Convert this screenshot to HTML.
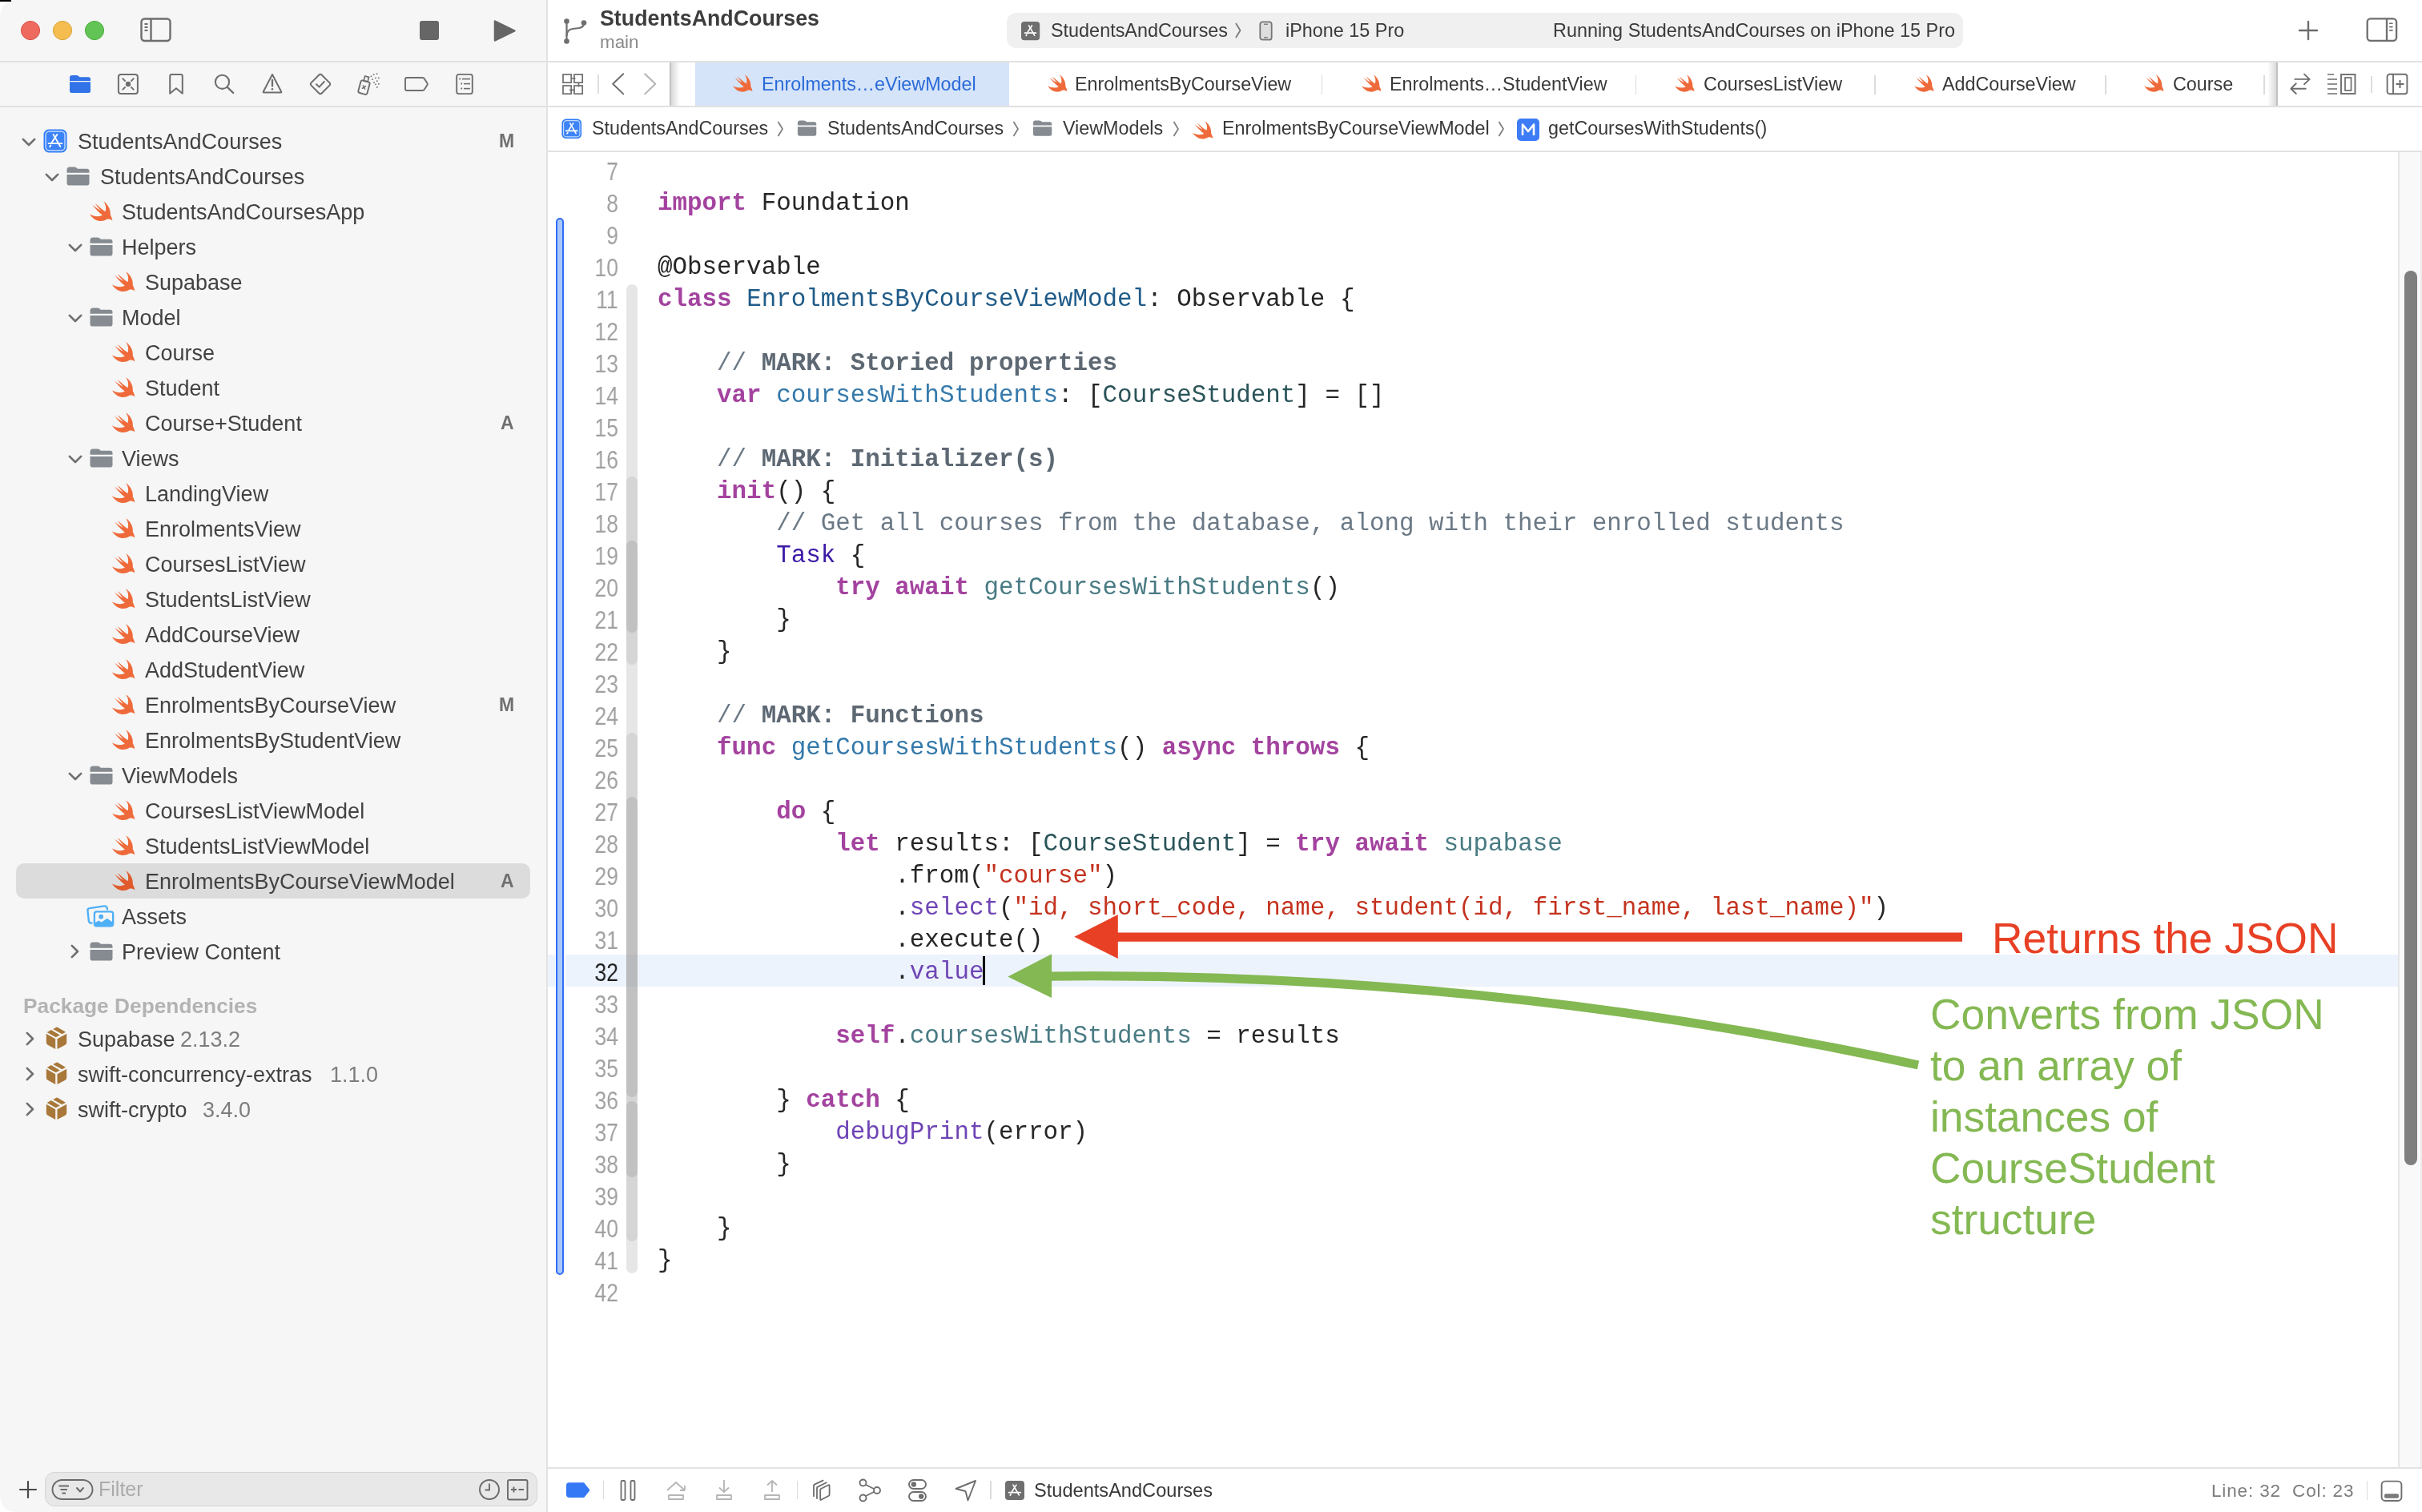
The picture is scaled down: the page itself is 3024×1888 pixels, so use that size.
<!DOCTYPE html><html><head><meta charset="utf-8"><style>
html,body{margin:0;padding:0;width:3024px;height:1888px;overflow:hidden;background:#ffffff;}
.t{position:absolute;white-space:pre;will-change:transform;}
.r{position:absolute;}
.s{position:absolute;overflow:visible;}
</style></head><body>
<div class="r" style="left:0px;top:0px;width:683px;height:1888px;background:#f6f6f6;"></div>
<div class="r" style="left:682px;top:0px;width:2px;height:1888px;background:#e3e3e3;"></div>
<svg class="s" style="left:25px;top:25px;" width="26" height="26" viewBox="0 0 26 26"><circle cx="13" cy="13" r="11.6" fill="#ee6a5e" stroke="#d9534a" stroke-width="1"/></svg>
<svg class="s" style="left:65px;top:25px;" width="26" height="26" viewBox="0 0 26 26"><circle cx="13" cy="13" r="11.6" fill="#f5bd4f" stroke="#dba23a" stroke-width="1"/></svg>
<svg class="s" style="left:105px;top:25px;" width="26" height="26" viewBox="0 0 26 26"><circle cx="13" cy="13" r="11.6" fill="#61c454" stroke="#4fae42" stroke-width="1"/></svg>
<svg class="s" style="left:175px;top:22px;" width="40" height="31" viewBox="0 0 40 31"><rect x="1.5" y="1.5" width="36" height="27.5" rx="4" fill="none" stroke="#6e6e6e" stroke-width="2.4"/><line x1="13.5" y1="1.5" x2="13.5" y2="29" stroke="#6e6e6e" stroke-width="2.4"/><line x1="5.5" y1="8" x2="9.5" y2="8" stroke="#6e6e6e" stroke-width="2"/><line x1="5.5" y1="12" x2="9.5" y2="12" stroke="#6e6e6e" stroke-width="2"/><line x1="5.5" y1="16" x2="9.5" y2="16" stroke="#6e6e6e" stroke-width="2"/></svg>
<div class="r" style="left:524px;top:26px;width:24px;height:24px;background:#666666;border-radius:3px;"></div>
<svg class="s" style="left:615px;top:23px;" width="32" height="31" viewBox="0 0 32 31"><path d="M3 3.5 L27.5 15.5 L3 27.5 Z" fill="#666666" stroke="#666666" stroke-width="2.5" stroke-linejoin="round"/></svg>
<div class="r" style="left:0px;top:76px;width:682px;height:2px;background:#e1e1e1;"></div>
<div class="r" style="left:0px;top:132px;width:682px;height:2px;background:#e1e1e1;"></div>
<svg class="s" style="left:86px;top:93px;" width="28" height="24" viewBox="0 0 28 24"><path d="M1 4 Q1 1 4 1 L9.5 1 Q11 1 12 2 L13.5 3.2 L24.5 3.2 Q27 3.2 27 6 L27 8 L1 8 Z" fill="#3273e8"/><path d="M1 9.3 L27 9.3 L27 20.5 Q27 23 24.5 23 L3.5 23 Q1 23 1 20.5 Z" fill="#3273e8"/></svg>
<svg class="s" style="left:146px;top:91px;" width="28" height="28" viewBox="0 0 28 28"><rect x="1.9" y="2.1" width="24" height="24" rx="3" fill="none" stroke="#6e6e6e" stroke-width="2"/><circle cx="14" cy="14" r="3.2" fill="#6e6e6e"/><path d="M7.2 7.2 L10 10 M20.8 7.2 L18 10 M7.2 20.8 L10 18 M20.8 20.8 L18 18" stroke="#6e6e6e" stroke-width="1.9" stroke-linecap="round"/></svg>
<svg class="s" style="left:210px;top:91px;" width="20" height="28" viewBox="0 0 20 28"><path d="M2.2 25.8 L2.2 4 Q2.2 2 4.2 2 L15.8 2 Q17.8 2 17.8 4 L17.8 25.8 L10 19.3 Z" fill="none" stroke="#6e6e6e" stroke-width="2" stroke-linejoin="round"/></svg>
<svg class="s" style="left:265px;top:90px;" width="30" height="30" viewBox="0 0 30 30"><circle cx="12.5" cy="12.3" r="8.6" fill="none" stroke="#6e6e6e" stroke-width="2.1"/><line x1="18.8" y1="18.8" x2="26.2" y2="26" stroke="#6e6e6e" stroke-width="2.4" stroke-linecap="round"/></svg>
<svg class="s" style="left:326px;top:90px;" width="28" height="28" viewBox="0 0 28 28"><path d="M14 3 L25.2 24.5 Q25.6 25.5 24.5 25.5 L3.5 25.5 Q2.4 25.5 2.8 24.5 Z" fill="none" stroke="#6e6e6e" stroke-width="2" stroke-linejoin="round"/><path d="M14 10 L14 17.5" stroke="#6e6e6e" stroke-width="2.3" stroke-linecap="round"/><circle cx="14" cy="21.2" r="1.3" fill="#6e6e6e"/></svg>
<svg class="s" style="left:386px;top:91px;" width="28" height="28" viewBox="0 0 28 28"><path d="M14 1.8 Q14.9 1.8 15.6 2.5 L25.5 12.4 Q26.2 13.1 26.2 14 Q26.2 14.9 25.5 15.6 L15.6 25.5 Q14.9 26.2 14 26.2 Q13.1 26.2 12.4 25.5 L2.5 15.6 Q1.8 14.9 1.8 14 Q1.8 13.1 2.5 12.4 L12.4 2.5 Q13.1 1.8 14 1.8 Z" fill="none" stroke="#6e6e6e" stroke-width="2"/><path d="M9 14.2 L12.5 17.6 L18.8 11" fill="none" stroke="#6e6e6e" stroke-width="2" stroke-linecap="round" stroke-linejoin="round"/></svg>
<svg class="s" style="left:445px;top:91px;" width="32" height="29" viewBox="0 0 32 29"><g transform="rotate(15 9 17)"><rect x="4" y="10" width="11.5" height="16" rx="2.2" fill="none" stroke="#6e6e6e" stroke-width="1.9"/><rect x="7.3" y="4" width="5" height="6" fill="none" stroke="#6e6e6e" stroke-width="1.7"/><path d="M7.6 15.6 L11.8 20 M11.8 15.6 L7.6 20" stroke="#6e6e6e" stroke-width="1.5"/></g><g fill="#6e6e6e"><rect x="17.6" y="3.5" width="1.6" height="1.6"/><rect x="20.8" y="1.4" width="1.6" height="1.6"/><rect x="24.8" y="0.4" width="1.6" height="1.6"/><rect x="19.2" y="7.4" width="1.6" height="1.6"/><rect x="23.2" y="5.6" width="1.6" height="1.6"/><rect x="27" y="5.6" width="1.6" height="1.6"/><rect x="21.2" y="11.3" width="1.6" height="1.6"/><rect x="25" y="9.4" width="1.6" height="1.6"/><rect x="23.2" y="13.5" width="1.6" height="1.6"/><rect x="27" y="13" width="1.6" height="1.6"/><rect x="25" y="17.2" width="1.6" height="1.6"/></g></svg>
<svg class="s" style="left:504px;top:94px;" width="32" height="22" viewBox="0 0 32 22"><path d="M4 3 L23.5 3 Q25 3 26 4.4 L29.5 10 Q30 11 29.5 12 L26 17.6 Q25 19 23.5 19 L4 19 Q2 19 2 17 L2 5 Q2 3 4 3 Z" fill="none" stroke="#6e6e6e" stroke-width="1.9" stroke-linejoin="round"/></svg>
<svg class="s" style="left:568px;top:91px;" width="24" height="28" viewBox="0 0 24 28"><rect x="2.2" y="1.9" width="19.6" height="24.2" rx="2.6" fill="none" stroke="#6e6e6e" stroke-width="1.9"/><g fill="#6e6e6e"><rect x="5.3" y="6.6" width="1.8" height="1.8"/><rect x="9.0" y="6.8" width="10" height="1.6"/><rect x="7.3" y="12.6" width="1.8" height="1.8"/><rect x="11.0" y="12.8" width="8" height="1.6"/><rect x="7.3" y="18.6" width="1.8" height="1.8"/><rect x="11.0" y="18.8" width="8" height="1.6"/></g></svg>
<svg class="s" style="left:27.4px;top:171.7px;" width="18" height="11" viewBox="0 0 18 11"><path d="M1.8 1.8 L9 9 L16.2 1.8" fill="none" stroke="#6f6f6f" stroke-width="2.6" stroke-linecap="round" stroke-linejoin="round"/></svg>
<svg class="s" style="left:54.4px;top:160.89999999999998px;" width="30" height="30" viewBox="0 0 30 30"><rect x="0.5" y="0.5" width="29" height="29" rx="6.5" fill="#2d7bf7"/><rect x="3" y="3" width="24" height="24" rx="4.5" fill="#3d83f7" stroke="#c5dbfd" stroke-width="1.4"/><g stroke="#ffffff" stroke-width="1.9" stroke-linecap="round" fill="none"><path d="M12.6 6.9 L21.3 22"/><path d="M17.3 6.9 L10.9 16.6"/><path d="M6.6 18.1 L23.5 18.1"/><path d="M9.3 20.6 L8.2 22.2"/></g></svg>
<div class="t" style="left:96.70px;top:159.94px;font-size:27px;line-height:35px;color:#424242;font-weight:400;font-family:'Liberation Sans', sans-serif;">StudentsAndCourses</div>
<div class="t" style="right:2382.00px;top:160.93px;font-size:23px;line-height:30px;color:#707070;font-weight:700;font-family:'Liberation Sans', sans-serif;text-align:right;">M</div>
<svg class="s" style="left:56.0px;top:215.7px;" width="18" height="11" viewBox="0 0 18 11"><path d="M1.8 1.8 L9 9 L16.2 1.8" fill="none" stroke="#6f6f6f" stroke-width="2.6" stroke-linecap="round" stroke-linejoin="round"/></svg>
<svg class="s" style="left:83.0px;top:207.7px;" width="29" height="24" viewBox="0 0 29 24"><path d="M0.5 4 Q0.5 0.5 4 0.5 L9.5 0.5 Q11.3 0.5 12.5 1.6 L13.8 2.8 L25.5 2.8 Q28.5 2.8 28.5 6 L28.5 7.8 L0.5 7.8 Z" fill="#858b90"/><path d="M0.5 10 L28.5 10 L28.5 20.5 Q28.5 23.6 25.5 23.6 L3.5 23.6 Q0.5 23.6 0.5 20.5 Z" fill="#858b90"/></svg>
<div class="t" style="left:125.00px;top:203.94px;font-size:27px;line-height:35px;color:#424242;font-weight:400;font-family:'Liberation Sans', sans-serif;">StudentsAndCourses</div>
<svg class="s" style="left:111.6px;top:250.6px;" width="28.5" height="25.1" viewBox="340 320 860 760"><path d="M860,330 C1010,430 1140,620 1120,840 C1150,900 1190,980 1195,1060 C1130,1010 1060,995 990,1010 C900,1060 800,1090 700,1075 C560,1055 430,960 340,820 C480,900 680,930 820,860 C680,750 520,580 430,460 C560,560 680,650 760,680 C680,600 600,500 540,410 C680,520 820,660 930,720 C970,600 950,450 860,330 Z" fill="#ef6a3a"/></svg>
<div class="t" style="left:152.40px;top:247.94px;font-size:27px;line-height:35px;color:#424242;font-weight:400;font-family:'Liberation Sans', sans-serif;">StudentsAndCoursesApp</div>
<svg class="s" style="left:84.6px;top:303.7px;" width="18" height="11" viewBox="0 0 18 11"><path d="M1.8 1.8 L9 9 L16.2 1.8" fill="none" stroke="#6f6f6f" stroke-width="2.6" stroke-linecap="round" stroke-linejoin="round"/></svg>
<svg class="s" style="left:111.6px;top:295.7px;" width="29" height="24" viewBox="0 0 29 24"><path d="M0.5 4 Q0.5 0.5 4 0.5 L9.5 0.5 Q11.3 0.5 12.5 1.6 L13.8 2.8 L25.5 2.8 Q28.5 2.8 28.5 6 L28.5 7.8 L0.5 7.8 Z" fill="#858b90"/><path d="M0.5 10 L28.5 10 L28.5 20.5 Q28.5 23.6 25.5 23.6 L3.5 23.6 Q0.5 23.6 0.5 20.5 Z" fill="#858b90"/></svg>
<div class="t" style="left:152.40px;top:291.94px;font-size:27px;line-height:35px;color:#424242;font-weight:400;font-family:'Liberation Sans', sans-serif;">Helpers</div>
<svg class="s" style="left:140.20000000000002px;top:338.59999999999997px;" width="28.5" height="25.1" viewBox="340 320 860 760"><path d="M860,330 C1010,430 1140,620 1120,840 C1150,900 1190,980 1195,1060 C1130,1010 1060,995 990,1010 C900,1060 800,1090 700,1075 C560,1055 430,960 340,820 C480,900 680,930 820,860 C680,750 520,580 430,460 C560,560 680,650 760,680 C680,600 600,500 540,410 C680,520 820,660 930,720 C970,600 950,450 860,330 Z" fill="#ef6a3a"/></svg>
<div class="t" style="left:180.60px;top:335.94px;font-size:27px;line-height:35px;color:#424242;font-weight:400;font-family:'Liberation Sans', sans-serif;">Supabase</div>
<svg class="s" style="left:84.6px;top:391.7px;" width="18" height="11" viewBox="0 0 18 11"><path d="M1.8 1.8 L9 9 L16.2 1.8" fill="none" stroke="#6f6f6f" stroke-width="2.6" stroke-linecap="round" stroke-linejoin="round"/></svg>
<svg class="s" style="left:111.6px;top:383.7px;" width="29" height="24" viewBox="0 0 29 24"><path d="M0.5 4 Q0.5 0.5 4 0.5 L9.5 0.5 Q11.3 0.5 12.5 1.6 L13.8 2.8 L25.5 2.8 Q28.5 2.8 28.5 6 L28.5 7.8 L0.5 7.8 Z" fill="#858b90"/><path d="M0.5 10 L28.5 10 L28.5 20.5 Q28.5 23.6 25.5 23.6 L3.5 23.6 Q0.5 23.6 0.5 20.5 Z" fill="#858b90"/></svg>
<div class="t" style="left:152.40px;top:379.94px;font-size:27px;line-height:35px;color:#424242;font-weight:400;font-family:'Liberation Sans', sans-serif;">Model</div>
<svg class="s" style="left:140.20000000000002px;top:426.59999999999997px;" width="28.5" height="25.1" viewBox="340 320 860 760"><path d="M860,330 C1010,430 1140,620 1120,840 C1150,900 1190,980 1195,1060 C1130,1010 1060,995 990,1010 C900,1060 800,1090 700,1075 C560,1055 430,960 340,820 C480,900 680,930 820,860 C680,750 520,580 430,460 C560,560 680,650 760,680 C680,600 600,500 540,410 C680,520 820,660 930,720 C970,600 950,450 860,330 Z" fill="#ef6a3a"/></svg>
<div class="t" style="left:180.60px;top:423.94px;font-size:27px;line-height:35px;color:#424242;font-weight:400;font-family:'Liberation Sans', sans-serif;">Course</div>
<svg class="s" style="left:140.20000000000002px;top:470.59999999999997px;" width="28.5" height="25.1" viewBox="340 320 860 760"><path d="M860,330 C1010,430 1140,620 1120,840 C1150,900 1190,980 1195,1060 C1130,1010 1060,995 990,1010 C900,1060 800,1090 700,1075 C560,1055 430,960 340,820 C480,900 680,930 820,860 C680,750 520,580 430,460 C560,560 680,650 760,680 C680,600 600,500 540,410 C680,520 820,660 930,720 C970,600 950,450 860,330 Z" fill="#ef6a3a"/></svg>
<div class="t" style="left:180.60px;top:467.94px;font-size:27px;line-height:35px;color:#424242;font-weight:400;font-family:'Liberation Sans', sans-serif;">Student</div>
<svg class="s" style="left:140.20000000000002px;top:514.6px;" width="28.5" height="25.1" viewBox="340 320 860 760"><path d="M860,330 C1010,430 1140,620 1120,840 C1150,900 1190,980 1195,1060 C1130,1010 1060,995 990,1010 C900,1060 800,1090 700,1075 C560,1055 430,960 340,820 C480,900 680,930 820,860 C680,750 520,580 430,460 C560,560 680,650 760,680 C680,600 600,500 540,410 C680,520 820,660 930,720 C970,600 950,450 860,330 Z" fill="#ef6a3a"/></svg>
<div class="t" style="left:180.60px;top:511.94px;font-size:27px;line-height:35px;color:#424242;font-weight:400;font-family:'Liberation Sans', sans-serif;">Course+Student</div>
<div class="t" style="right:2382.00px;top:512.93px;font-size:23px;line-height:30px;color:#707070;font-weight:700;font-family:'Liberation Sans', sans-serif;text-align:right;">A</div>
<svg class="s" style="left:84.6px;top:567.7px;" width="18" height="11" viewBox="0 0 18 11"><path d="M1.8 1.8 L9 9 L16.2 1.8" fill="none" stroke="#6f6f6f" stroke-width="2.6" stroke-linecap="round" stroke-linejoin="round"/></svg>
<svg class="s" style="left:111.6px;top:559.7px;" width="29" height="24" viewBox="0 0 29 24"><path d="M0.5 4 Q0.5 0.5 4 0.5 L9.5 0.5 Q11.3 0.5 12.5 1.6 L13.8 2.8 L25.5 2.8 Q28.5 2.8 28.5 6 L28.5 7.8 L0.5 7.8 Z" fill="#858b90"/><path d="M0.5 10 L28.5 10 L28.5 20.5 Q28.5 23.6 25.5 23.6 L3.5 23.6 Q0.5 23.6 0.5 20.5 Z" fill="#858b90"/></svg>
<div class="t" style="left:152.40px;top:555.94px;font-size:27px;line-height:35px;color:#424242;font-weight:400;font-family:'Liberation Sans', sans-serif;">Views</div>
<svg class="s" style="left:140.20000000000002px;top:602.6px;" width="28.5" height="25.1" viewBox="340 320 860 760"><path d="M860,330 C1010,430 1140,620 1120,840 C1150,900 1190,980 1195,1060 C1130,1010 1060,995 990,1010 C900,1060 800,1090 700,1075 C560,1055 430,960 340,820 C480,900 680,930 820,860 C680,750 520,580 430,460 C560,560 680,650 760,680 C680,600 600,500 540,410 C680,520 820,660 930,720 C970,600 950,450 860,330 Z" fill="#ef6a3a"/></svg>
<div class="t" style="left:180.60px;top:599.94px;font-size:27px;line-height:35px;color:#424242;font-weight:400;font-family:'Liberation Sans', sans-serif;">LandingView</div>
<svg class="s" style="left:140.20000000000002px;top:646.6px;" width="28.5" height="25.1" viewBox="340 320 860 760"><path d="M860,330 C1010,430 1140,620 1120,840 C1150,900 1190,980 1195,1060 C1130,1010 1060,995 990,1010 C900,1060 800,1090 700,1075 C560,1055 430,960 340,820 C480,900 680,930 820,860 C680,750 520,580 430,460 C560,560 680,650 760,680 C680,600 600,500 540,410 C680,520 820,660 930,720 C970,600 950,450 860,330 Z" fill="#ef6a3a"/></svg>
<div class="t" style="left:180.60px;top:643.94px;font-size:27px;line-height:35px;color:#424242;font-weight:400;font-family:'Liberation Sans', sans-serif;">EnrolmentsView</div>
<svg class="s" style="left:140.20000000000002px;top:690.6px;" width="28.5" height="25.1" viewBox="340 320 860 760"><path d="M860,330 C1010,430 1140,620 1120,840 C1150,900 1190,980 1195,1060 C1130,1010 1060,995 990,1010 C900,1060 800,1090 700,1075 C560,1055 430,960 340,820 C480,900 680,930 820,860 C680,750 520,580 430,460 C560,560 680,650 760,680 C680,600 600,500 540,410 C680,520 820,660 930,720 C970,600 950,450 860,330 Z" fill="#ef6a3a"/></svg>
<div class="t" style="left:180.60px;top:687.94px;font-size:27px;line-height:35px;color:#424242;font-weight:400;font-family:'Liberation Sans', sans-serif;">CoursesListView</div>
<svg class="s" style="left:140.20000000000002px;top:734.6px;" width="28.5" height="25.1" viewBox="340 320 860 760"><path d="M860,330 C1010,430 1140,620 1120,840 C1150,900 1190,980 1195,1060 C1130,1010 1060,995 990,1010 C900,1060 800,1090 700,1075 C560,1055 430,960 340,820 C480,900 680,930 820,860 C680,750 520,580 430,460 C560,560 680,650 760,680 C680,600 600,500 540,410 C680,520 820,660 930,720 C970,600 950,450 860,330 Z" fill="#ef6a3a"/></svg>
<div class="t" style="left:180.60px;top:731.94px;font-size:27px;line-height:35px;color:#424242;font-weight:400;font-family:'Liberation Sans', sans-serif;">StudentsListView</div>
<svg class="s" style="left:140.20000000000002px;top:778.6px;" width="28.5" height="25.1" viewBox="340 320 860 760"><path d="M860,330 C1010,430 1140,620 1120,840 C1150,900 1190,980 1195,1060 C1130,1010 1060,995 990,1010 C900,1060 800,1090 700,1075 C560,1055 430,960 340,820 C480,900 680,930 820,860 C680,750 520,580 430,460 C560,560 680,650 760,680 C680,600 600,500 540,410 C680,520 820,660 930,720 C970,600 950,450 860,330 Z" fill="#ef6a3a"/></svg>
<div class="t" style="left:180.60px;top:775.94px;font-size:27px;line-height:35px;color:#424242;font-weight:400;font-family:'Liberation Sans', sans-serif;">AddCourseView</div>
<svg class="s" style="left:140.20000000000002px;top:822.6px;" width="28.5" height="25.1" viewBox="340 320 860 760"><path d="M860,330 C1010,430 1140,620 1120,840 C1150,900 1190,980 1195,1060 C1130,1010 1060,995 990,1010 C900,1060 800,1090 700,1075 C560,1055 430,960 340,820 C480,900 680,930 820,860 C680,750 520,580 430,460 C560,560 680,650 760,680 C680,600 600,500 540,410 C680,520 820,660 930,720 C970,600 950,450 860,330 Z" fill="#ef6a3a"/></svg>
<div class="t" style="left:180.60px;top:819.94px;font-size:27px;line-height:35px;color:#424242;font-weight:400;font-family:'Liberation Sans', sans-serif;">AddStudentView</div>
<svg class="s" style="left:140.20000000000002px;top:866.6px;" width="28.5" height="25.1" viewBox="340 320 860 760"><path d="M860,330 C1010,430 1140,620 1120,840 C1150,900 1190,980 1195,1060 C1130,1010 1060,995 990,1010 C900,1060 800,1090 700,1075 C560,1055 430,960 340,820 C480,900 680,930 820,860 C680,750 520,580 430,460 C560,560 680,650 760,680 C680,600 600,500 540,410 C680,520 820,660 930,720 C970,600 950,450 860,330 Z" fill="#ef6a3a"/></svg>
<div class="t" style="left:180.60px;top:863.94px;font-size:27px;line-height:35px;color:#424242;font-weight:400;font-family:'Liberation Sans', sans-serif;">EnrolmentsByCourseView</div>
<div class="t" style="right:2382.00px;top:864.93px;font-size:23px;line-height:30px;color:#707070;font-weight:700;font-family:'Liberation Sans', sans-serif;text-align:right;">M</div>
<svg class="s" style="left:140.20000000000002px;top:910.6px;" width="28.5" height="25.1" viewBox="340 320 860 760"><path d="M860,330 C1010,430 1140,620 1120,840 C1150,900 1190,980 1195,1060 C1130,1010 1060,995 990,1010 C900,1060 800,1090 700,1075 C560,1055 430,960 340,820 C480,900 680,930 820,860 C680,750 520,580 430,460 C560,560 680,650 760,680 C680,600 600,500 540,410 C680,520 820,660 930,720 C970,600 950,450 860,330 Z" fill="#ef6a3a"/></svg>
<div class="t" style="left:180.60px;top:907.94px;font-size:27px;line-height:35px;color:#424242;font-weight:400;font-family:'Liberation Sans', sans-serif;">EnrolmentsByStudentView</div>
<svg class="s" style="left:84.6px;top:963.7px;" width="18" height="11" viewBox="0 0 18 11"><path d="M1.8 1.8 L9 9 L16.2 1.8" fill="none" stroke="#6f6f6f" stroke-width="2.6" stroke-linecap="round" stroke-linejoin="round"/></svg>
<svg class="s" style="left:111.6px;top:955.7px;" width="29" height="24" viewBox="0 0 29 24"><path d="M0.5 4 Q0.5 0.5 4 0.5 L9.5 0.5 Q11.3 0.5 12.5 1.6 L13.8 2.8 L25.5 2.8 Q28.5 2.8 28.5 6 L28.5 7.8 L0.5 7.8 Z" fill="#858b90"/><path d="M0.5 10 L28.5 10 L28.5 20.5 Q28.5 23.6 25.5 23.6 L3.5 23.6 Q0.5 23.6 0.5 20.5 Z" fill="#858b90"/></svg>
<div class="t" style="left:152.40px;top:951.94px;font-size:27px;line-height:35px;color:#424242;font-weight:400;font-family:'Liberation Sans', sans-serif;">ViewModels</div>
<svg class="s" style="left:140.20000000000002px;top:998.6px;" width="28.5" height="25.1" viewBox="340 320 860 760"><path d="M860,330 C1010,430 1140,620 1120,840 C1150,900 1190,980 1195,1060 C1130,1010 1060,995 990,1010 C900,1060 800,1090 700,1075 C560,1055 430,960 340,820 C480,900 680,930 820,860 C680,750 520,580 430,460 C560,560 680,650 760,680 C680,600 600,500 540,410 C680,520 820,660 930,720 C970,600 950,450 860,330 Z" fill="#ef6a3a"/></svg>
<div class="t" style="left:180.60px;top:995.94px;font-size:27px;line-height:35px;color:#424242;font-weight:400;font-family:'Liberation Sans', sans-serif;">CoursesListViewModel</div>
<svg class="s" style="left:140.20000000000002px;top:1042.6000000000001px;" width="28.5" height="25.1" viewBox="340 320 860 760"><path d="M860,330 C1010,430 1140,620 1120,840 C1150,900 1190,980 1195,1060 C1130,1010 1060,995 990,1010 C900,1060 800,1090 700,1075 C560,1055 430,960 340,820 C480,900 680,930 820,860 C680,750 520,580 430,460 C560,560 680,650 760,680 C680,600 600,500 540,410 C680,520 820,660 930,720 C970,600 950,450 860,330 Z" fill="#ef6a3a"/></svg>
<div class="t" style="left:180.60px;top:1039.94px;font-size:27px;line-height:35px;color:#424242;font-weight:400;font-family:'Liberation Sans', sans-serif;">StudentsListViewModel</div>
<div class="r" style="left:20px;top:1078px;width:642px;height:44px;background:#dcdcdc;border-radius:10px;"></div>
<svg class="s" style="left:140.20000000000002px;top:1086.6000000000001px;" width="28.5" height="25.1" viewBox="340 320 860 760"><path d="M860,330 C1010,430 1140,620 1120,840 C1150,900 1190,980 1195,1060 C1130,1010 1060,995 990,1010 C900,1060 800,1090 700,1075 C560,1055 430,960 340,820 C480,900 680,930 820,860 C680,750 520,580 430,460 C560,560 680,650 760,680 C680,600 600,500 540,410 C680,520 820,660 930,720 C970,600 950,450 860,330 Z" fill="#e05a2c"/></svg>
<div class="t" style="left:180.60px;top:1083.94px;font-size:27px;line-height:35px;color:#424242;font-weight:400;font-family:'Liberation Sans', sans-serif;">EnrolmentsByCourseViewModel</div>
<div class="t" style="right:2382.00px;top:1084.93px;font-size:23px;line-height:30px;color:#707070;font-weight:700;font-family:'Liberation Sans', sans-serif;text-align:right;">A</div>
<!-- assets -->
<svg class="s" style="left:109.1px;top:1129.7px;" width="34" height="28" viewBox="280 290 1000 830"><g fill="none" stroke="#4fb0f6" stroke-width="70" stroke-linejoin="round"><path d="M470 960 L420 960 Q340 960 330 880 L290 500 Q280 420 360 410 L900 330 Q990 320 1010 410 L1020 480"/><rect x="540" y="540" width="690" height="530" rx="80"/></g><path d="M560 950 L700 870 L800 930 L1010 790 L1210 930 L1210 1040 Q1210 1080 1170 1080 L580 1080 Q560 1080 560 1040 Z" fill="#4fb0f6"/><circle cx="785" cy="725" r="85" fill="#4fb0f6"/></svg>
<div class="t" style="left:152.40px;top:1127.94px;font-size:27px;line-height:35px;color:#424242;font-weight:400;font-family:'Liberation Sans', sans-serif;">Assets</div>
<svg class="s" style="left:87.6px;top:1179.2px;" width="11" height="18" viewBox="0 0 11 18"><path d="M1.8 1.8 L9 9 L1.8 16.2" fill="none" stroke="#6f6f6f" stroke-width="2.6" stroke-linecap="round" stroke-linejoin="round"/></svg>
<svg class="s" style="left:111.6px;top:1175.7px;" width="29" height="24" viewBox="0 0 29 24"><path d="M0.5 4 Q0.5 0.5 4 0.5 L9.5 0.5 Q11.3 0.5 12.5 1.6 L13.8 2.8 L25.5 2.8 Q28.5 2.8 28.5 6 L28.5 7.8 L0.5 7.8 Z" fill="#858b90"/><path d="M0.5 10 L28.5 10 L28.5 20.5 Q28.5 23.6 25.5 23.6 L3.5 23.6 Q0.5 23.6 0.5 20.5 Z" fill="#858b90"/></svg>
<div class="t" style="left:152.40px;top:1171.94px;font-size:27px;line-height:35px;color:#424242;font-weight:400;font-family:'Liberation Sans', sans-serif;">Preview Content</div>
<div class="t" style="left:28.90px;top:1238.88px;font-size:26.3px;line-height:34px;color:#b3b3b3;font-weight:700;font-family:'Liberation Sans', sans-serif;">Package Dependencies</div>
<svg class="s" style="left:32px;top:1287.8px;" width="11" height="18" viewBox="0 0 11 18"><path d="M1.8 1.8 L9 9 L1.8 16.2" fill="none" stroke="#6f6f6f" stroke-width="2.6" stroke-linecap="round" stroke-linejoin="round"/></svg>
<svg class="s" style="left:56.5px;top:1281.8px;" width="27" height="29" viewBox="1100 200 830 880"><g fill="#a8783a"><path d="M1150 410 L1310 320 L1650 520 L1490 605 Z"/><path d="M1380 285 L1510 215 Q1530 205 1560 220 L1870 400 L1730 480 Z"/><path d="M1125 460 L1475 660 L1475 1055 L1180 890 Q1125 860 1125 800 Z"/><path d="M1545 660 L1905 460 L1905 800 Q1905 860 1850 890 L1545 1055 Z"/></g></svg>
<div class="t" style="left:96.80px;top:1280.54px;font-size:27px;line-height:35px;color:#424242;font-weight:400;font-family:'Liberation Sans', sans-serif;">Supabase</div>
<div class="t" style="left:224.90px;top:1280.54px;font-size:27px;line-height:35px;color:#7d7d7d;font-weight:400;font-family:'Liberation Sans', sans-serif;">2.13.2</div>
<svg class="s" style="left:32px;top:1331.8px;" width="11" height="18" viewBox="0 0 11 18"><path d="M1.8 1.8 L9 9 L1.8 16.2" fill="none" stroke="#6f6f6f" stroke-width="2.6" stroke-linecap="round" stroke-linejoin="round"/></svg>
<svg class="s" style="left:56.5px;top:1325.8px;" width="27" height="29" viewBox="1100 200 830 880"><g fill="#a8783a"><path d="M1150 410 L1310 320 L1650 520 L1490 605 Z"/><path d="M1380 285 L1510 215 Q1530 205 1560 220 L1870 400 L1730 480 Z"/><path d="M1125 460 L1475 660 L1475 1055 L1180 890 Q1125 860 1125 800 Z"/><path d="M1545 660 L1905 460 L1905 800 Q1905 860 1850 890 L1545 1055 Z"/></g></svg>
<div class="t" style="left:96.80px;top:1324.54px;font-size:27px;line-height:35px;color:#424242;font-weight:400;font-family:'Liberation Sans', sans-serif;">swift-concurrency-extras</div>
<div class="t" style="left:411.80px;top:1324.54px;font-size:27px;line-height:35px;color:#7d7d7d;font-weight:400;font-family:'Liberation Sans', sans-serif;">1.1.0</div>
<svg class="s" style="left:32px;top:1375.8px;" width="11" height="18" viewBox="0 0 11 18"><path d="M1.8 1.8 L9 9 L1.8 16.2" fill="none" stroke="#6f6f6f" stroke-width="2.6" stroke-linecap="round" stroke-linejoin="round"/></svg>
<svg class="s" style="left:56.5px;top:1369.8px;" width="27" height="29" viewBox="1100 200 830 880"><g fill="#a8783a"><path d="M1150 410 L1310 320 L1650 520 L1490 605 Z"/><path d="M1380 285 L1510 215 Q1530 205 1560 220 L1870 400 L1730 480 Z"/><path d="M1125 460 L1475 660 L1475 1055 L1180 890 Q1125 860 1125 800 Z"/><path d="M1545 660 L1905 460 L1905 800 Q1905 860 1850 890 L1545 1055 Z"/></g></svg>
<div class="t" style="left:96.80px;top:1368.54px;font-size:27px;line-height:35px;color:#424242;font-weight:400;font-family:'Liberation Sans', sans-serif;">swift-crypto</div>
<div class="t" style="left:252.90px;top:1368.54px;font-size:27px;line-height:35px;color:#7d7d7d;font-weight:400;font-family:'Liberation Sans', sans-serif;">3.4.0</div>
<div class="r" style="left:56px;top:1838px;width:615px;height:43px;background:#e8e8e8;border-radius:12px;box-sizing:border-box;border:1px solid #d4d4d4;"></div>
<svg class="s" style="left:20px;top:1845px;" width="30" height="30" viewBox="0 0 30 30"><path d="M15 5 L15 25 M5 15 L25 15" stroke="#4a4a4a" stroke-width="2.2" stroke-linecap="round"/></svg>
<svg class="s" style="left:64px;top:1846px;" width="54" height="28" viewBox="0 0 54 28"><rect x="1.5" y="2" width="50" height="24" rx="12" fill="none" stroke="#6a6a6a" stroke-width="1.9"/><path d="M9.5 9.5 L22 9.5 M11.5 14 L20 14 M13.5 18.5 L18 18.5" stroke="#6a6a6a" stroke-width="1.9"/><path d="M32 12 L36 16.5 L40 12" fill="none" stroke="#6a6a6a" stroke-width="2" stroke-linecap="round" stroke-linejoin="round"/></svg>
<div class="t" style="left:123.00px;top:1842.83px;font-size:25px;line-height:32px;color:#ababab;font-weight:400;font-family:'Liberation Sans', sans-serif;">Filter</div>
<svg class="s" style="left:597px;top:1846px;" width="28" height="28" viewBox="0 0 28 28"><circle cx="14" cy="14" r="12" fill="none" stroke="#6a6a6a" stroke-width="1.9"/><path d="M14 6.5 L14 14.5 L8.5 14.5" fill="none" stroke="#6a6a6a" stroke-width="1.9"/></svg>
<svg class="s" style="left:632px;top:1846px;" width="28" height="28" viewBox="0 0 28 28"><rect x="2" y="2" width="24.5" height="24.5" rx="2" fill="none" stroke="#6a6a6a" stroke-width="1.9"/><path d="M6 14 L13 14 M9.5 10.5 L9.5 17.5 M15.5 14 L22 14" stroke="#6a6a6a" stroke-width="1.9"/></svg>
<div class="r" style="left:684px;top:76px;width:2340px;height:2px;background:#e1e1e1;"></div>
<div class="r" style="left:684px;top:132px;width:2340px;height:2px;background:#e1e1e1;"></div>
<div class="r" style="left:684px;top:188px;width:2340px;height:2px;background:#e1e1e1;"></div>
<svg class="s" style="left:701px;top:21px;" width="34" height="36" viewBox="0 0 34 36"><g fill="none" stroke="#6e6e6e" stroke-width="2.2"><path d="M6.5 6 L6.5 30"/><path d="M6.5 24 Q6.5 16 14 15 L22 14 Q28 13 28 8"/></g><g fill="#6e6e6e"><circle cx="6.5" cy="5.5" r="3.3"/><circle cx="6.5" cy="30.5" r="3.3"/><circle cx="28" cy="7.5" r="3.3"/></g></svg>
<div class="t" style="left:748.50px;top:6.01px;font-size:26.8px;line-height:35px;color:#3d3d3d;font-weight:700;font-family:'Liberation Sans', sans-serif;">StudentsAndCourses</div>
<div class="t" style="left:748.50px;top:37.93px;font-size:22.4px;line-height:29px;color:#8a8a8a;font-weight:400;font-family:'Liberation Sans', sans-serif;">main</div>
<div class="r" style="left:1257px;top:16px;width:1194px;height:43.5px;background:#f0f0f0;border-radius:12px;"></div>
<svg class="s" style="left:1275px;top:26.6px;" width="23.2" height="23.2" viewBox="0 0 30 30"><rect x="0" y="0" width="30" height="30" rx="5" fill="#6f6f6f"/><g stroke="#ffffff" stroke-width="2.1" stroke-linecap="round" fill="none"><path d="M12.4 6.4 L21.6 22.4"/><path d="M17.4 6.4 L10.6 16.8"/><path d="M5.8 18.3 L24 18.3"/><path d="M9 20.9 L7.9 22.6"/></g></svg>
<div class="t" style="left:1311.50px;top:23.09px;font-size:23.4px;line-height:30px;color:#3a3a3a;font-weight:400;font-family:'Liberation Sans', sans-serif;">StudentsAndCourses</div>
<svg class="s" style="left:1541px;top:27px;" width="10" height="22" viewBox="0 0 10 22"><path d="M2 2 L7.5 11 L2 20" fill="none" stroke="#7a7a7a" stroke-width="1.8" stroke-linejoin="round"/></svg>
<svg class="s" style="left:1572px;top:25.5px;" width="17" height="25" viewBox="0 0 17 25"><rect x="1.3" y="1.3" width="14.4" height="22.4" rx="3" fill="#dedede" stroke="#767676" stroke-width="1.8"/><rect x="6" y="3.6" width="5" height="1.3" fill="#767676"/><rect x="6" y="20.2" width="5" height="1.3" fill="#767676"/></svg>
<div class="t" style="left:1605.00px;top:23.09px;font-size:23.4px;line-height:30px;color:#3a3a3a;font-weight:400;font-family:'Liberation Sans', sans-serif;">iPhone 15 Pro</div>
<div class="t" style="left:1939.00px;top:23.09px;font-size:23.4px;line-height:30px;color:#3a3a3a;font-weight:400;font-family:'Liberation Sans', sans-serif;">Running StudentsAndCourses on iPhone 15 Pro</div>
<svg class="s" style="left:2868px;top:25px;" width="28" height="26" viewBox="0 0 28 26"><path d="M14 2 L14 24 M3 13 L25 13" stroke="#6e6e6e" stroke-width="2.4" stroke-linecap="round"/></svg>
<svg class="s" style="left:2953px;top:21px;" width="42" height="32" viewBox="0 0 42 32"><rect x="2.7" y="2.4" width="36.4" height="27.4" rx="4" fill="none" stroke="#6e6e6e" stroke-width="2.3"/><line x1="27" y1="2.4" x2="27" y2="29.8" stroke="#6e6e6e" stroke-width="2.3"/><path d="M30.7 8.3 L34 8.3 M30.7 12.6 L34 12.6 M30.7 16.9 L34 16.9" stroke="#6e6e6e" stroke-width="1.6" stroke-linecap="round"/></svg>
<svg class="s" style="left:700px;top:90px;" width="30" height="30" viewBox="0 0 30 30"><g fill="none" stroke="#6e6e6e" stroke-width="1.7"><rect x="3" y="3" width="10.2" height="10.2"/><rect x="17" y="3" width="10.2" height="10.2"/><rect x="3" y="17" width="10.2" height="10.2"/><rect x="17" y="17" width="10.2" height="10.2"/><path d="M13.2 8 L18.5 8 M22.5 13.2 L22.5 18.5 M16.8 22.4 L11 22.4"/></g></svg>
<div class="r" style="left:746.2px;top:93px;width:1.6px;height:23.7px;background:#dedede;"></div>
<svg class="s" style="left:760px;top:89px;" width="22" height="32" viewBox="0 0 22 32"><path d="M18.3 3.3 L5.2 15.8 L18.3 28.4" fill="none" stroke="#6e6e6e" stroke-width="2" stroke-linecap="round" stroke-linejoin="round"/></svg>
<svg class="s" style="left:802px;top:89px;" width="22" height="32" viewBox="0 0 22 32"><path d="M3.2 3.3 L16.3 15.8 L3.2 28.4" fill="none" stroke="#b3b3b3" stroke-width="2" stroke-linecap="round" stroke-linejoin="round"/></svg>
<div class="r" style="left:836px;top:78px;width:2px;height:54px;background:#c2c2c2;"></div>
<div class="r" style="left:838px;top:78px;width:11px;height:54px;background:linear-gradient(90deg, rgba(0,0,0,0.15), rgba(0,0,0,0));"></div>
<div class="r" style="left:868px;top:78px;width:392px;height:54px;background:#d5e4f9;"></div>
<svg class="s" style="left:915px;top:93px;" width="24.6" height="21.7" viewBox="340 320 860 760"><path d="M860,330 C1010,430 1140,620 1120,840 C1150,900 1190,980 1195,1060 C1130,1010 1060,995 990,1010 C900,1060 800,1090 700,1075 C560,1055 430,960 340,820 C480,900 680,930 820,860 C680,750 520,580 430,460 C560,560 680,650 760,680 C680,600 600,500 540,410 C680,520 820,660 930,720 C970,600 950,450 860,330 Z" fill="#ef6a3a"/></svg>
<div class="t" style="left:950.80px;top:90.12px;font-size:23.3px;line-height:30px;color:#2a6ad8;font-weight:400;font-family:'Liberation Sans', sans-serif;">Enrolments…eViewModel</div>
<svg class="s" style="left:1308px;top:93px;" width="24.6" height="21.7" viewBox="340 320 860 760"><path d="M860,330 C1010,430 1140,620 1120,840 C1150,900 1190,980 1195,1060 C1130,1010 1060,995 990,1010 C900,1060 800,1090 700,1075 C560,1055 430,960 340,820 C480,900 680,930 820,860 C680,750 520,580 430,460 C560,560 680,650 760,680 C680,600 600,500 540,410 C680,520 820,660 930,720 C970,600 950,450 860,330 Z" fill="#ef6a3a"/></svg>
<div class="t" style="left:1342.00px;top:90.12px;font-size:23.3px;line-height:30px;color:#383838;font-weight:400;font-family:'Liberation Sans', sans-serif;">EnrolmentsByCourseView</div>
<svg class="s" style="left:1699.5px;top:93px;" width="24.6" height="21.7" viewBox="340 320 860 760"><path d="M860,330 C1010,430 1140,620 1120,840 C1150,900 1190,980 1195,1060 C1130,1010 1060,995 990,1010 C900,1060 800,1090 700,1075 C560,1055 430,960 340,820 C480,900 680,930 820,860 C680,750 520,580 430,460 C560,560 680,650 760,680 C680,600 600,500 540,410 C680,520 820,660 930,720 C970,600 950,450 860,330 Z" fill="#ef6a3a"/></svg>
<div class="t" style="left:1734.70px;top:90.12px;font-size:23.3px;line-height:30px;color:#383838;font-weight:400;font-family:'Liberation Sans', sans-serif;">Enrolments…StudentView</div>
<svg class="s" style="left:2091px;top:93px;" width="24.6" height="21.7" viewBox="340 320 860 760"><path d="M860,330 C1010,430 1140,620 1120,840 C1150,900 1190,980 1195,1060 C1130,1010 1060,995 990,1010 C900,1060 800,1090 700,1075 C560,1055 430,960 340,820 C480,900 680,930 820,860 C680,750 520,580 430,460 C560,560 680,650 760,680 C680,600 600,500 540,410 C680,520 820,660 930,720 C970,600 950,450 860,330 Z" fill="#ef6a3a"/></svg>
<div class="t" style="left:2126.60px;top:90.12px;font-size:23.3px;line-height:30px;color:#383838;font-weight:400;font-family:'Liberation Sans', sans-serif;">CoursesListView</div>
<svg class="s" style="left:2389.7px;top:93px;" width="24.6" height="21.7" viewBox="340 320 860 760"><path d="M860,330 C1010,430 1140,620 1120,840 C1150,900 1190,980 1195,1060 C1130,1010 1060,995 990,1010 C900,1060 800,1090 700,1075 C560,1055 430,960 340,820 C480,900 680,930 820,860 C680,750 520,580 430,460 C560,560 680,650 760,680 C680,600 600,500 540,410 C680,520 820,660 930,720 C970,600 950,450 860,330 Z" fill="#ef6a3a"/></svg>
<div class="t" style="left:2425.00px;top:90.12px;font-size:23.3px;line-height:30px;color:#383838;font-weight:400;font-family:'Liberation Sans', sans-serif;">AddCourseView</div>
<svg class="s" style="left:2677px;top:93px;" width="24.6" height="21.7" viewBox="340 320 860 760"><path d="M860,330 C1010,430 1140,620 1120,840 C1150,900 1190,980 1195,1060 C1130,1010 1060,995 990,1010 C900,1060 800,1090 700,1075 C560,1055 430,960 340,820 C480,900 680,930 820,860 C680,750 520,580 430,460 C560,560 680,650 760,680 C680,600 600,500 540,410 C680,520 820,660 930,720 C970,600 950,450 860,330 Z" fill="#ef6a3a"/></svg>
<div class="t" style="left:2712.50px;top:90.12px;font-size:23.3px;line-height:30px;color:#383838;font-weight:400;font-family:'Liberation Sans', sans-serif;">Course</div>
<div class="r" style="left:1649.85px;top:94px;width:1.5px;height:24px;background:#dcdcdc;"></div>
<div class="r" style="left:2041.75px;top:94px;width:1.5px;height:24px;background:#dcdcdc;"></div>
<div class="r" style="left:2340.25px;top:94px;width:1.5px;height:24px;background:#dcdcdc;"></div>
<div class="r" style="left:2628.05px;top:94px;width:1.5px;height:24px;background:#dcdcdc;"></div>
<div class="r" style="left:2826.25px;top:94px;width:1.5px;height:24px;background:#dcdcdc;"></div>
<div class="r" style="left:2831px;top:78px;width:11px;height:54px;background:linear-gradient(270deg, rgba(0,0,0,0.15), rgba(0,0,0,0));"></div>
<div class="r" style="left:2842px;top:78px;width:2px;height:54px;background:#c2c2c2;"></div>
<svg class="s" style="left:2857px;top:90px;" width="30" height="30" viewBox="0 0 30 30"><g fill="none" stroke="#6e6e6e" stroke-width="1.9" stroke-linecap="round" stroke-linejoin="round"><path d="M8.3 8.9 L26.6 8.9 M20 2.6 L26.6 8.9 L20 15.2"/><path d="M21.7 20.7 L3.3 20.7 M9.8 14.3 L3.3 20.7 L9.8 27"/></g></svg>
<svg class="s" style="left:2903px;top:90px;" width="42" height="30" viewBox="0 0 42 30"><g stroke="#6e6e6e" stroke-width="1.7"><path d="M3 3 L11 3 M3 9 L15 9 M3 15 L15 15 M3 21 L15 21 M3 27 L15 27"/></g><rect x="20" y="3" width="17.5" height="24" fill="none" stroke="#6e6e6e" stroke-width="1.9"/><rect x="25" y="7" width="7.5" height="16" fill="none" stroke="#6e6e6e" stroke-width="1.7"/></svg>
<div class="r" style="left:2960px;top:95px;width:1.5px;height:21px;background:#dddddd;"></div>
<svg class="s" style="left:2978px;top:90px;" width="30" height="30" viewBox="0 0 30 30"><rect x="2.6" y="2.7" width="24.8" height="24.5" rx="3" fill="none" stroke="#6e6e6e" stroke-width="1.9"/><line x1="10" y1="2.7" x2="10" y2="27.2" stroke="#6e6e6e" stroke-width="1.9"/><path d="M18.5 10 L18.5 20 M13.5 15 L23.5 15" stroke="#6e6e6e" stroke-width="1.9"/></svg>
<svg class="s" style="left:700.7px;top:147.6px;" width="25.5" height="25.5" viewBox="0 0 30 30"><rect x="0.5" y="0.5" width="29" height="29" rx="6.5" fill="#2d7bf7"/><rect x="3" y="3" width="24" height="24" rx="4.5" fill="#3d83f7" stroke="#c5dbfd" stroke-width="1.4"/><g stroke="#ffffff" stroke-width="1.9" stroke-linecap="round" fill="none"><path d="M12.6 6.9 L21.3 22"/><path d="M17.3 6.9 L10.9 16.6"/><path d="M6.6 18.1 L23.5 18.1"/><path d="M9.3 20.6 L8.2 22.2"/></g></svg>
<div class="t" style="left:738.80px;top:145.42px;font-size:23.3px;line-height:30px;color:#383838;font-weight:400;font-family:'Liberation Sans', sans-serif;">StudentsAndCourses</div>
<svg class="s" style="left:969.5px;top:150px;" width="9" height="22" viewBox="0 0 9 22"><path d="M1.5 2 L7 11 L1.5 20" fill="none" stroke="#7d7d7d" stroke-width="1.7" stroke-linejoin="round"/></svg>
<svg class="s" style="left:995.2px;top:150.2px;" width="25.2" height="20" viewBox="0 0 29 24"><path d="M0.5 4 Q0.5 0.5 4 0.5 L9.5 0.5 Q11.3 0.5 12.5 1.6 L13.8 2.8 L25.5 2.8 Q28.5 2.8 28.5 6 L28.5 7.8 L0.5 7.8 Z" fill="#858b90"/><path d="M0.5 10 L28.5 10 L28.5 20.5 Q28.5 23.6 25.5 23.6 L3.5 23.6 Q0.5 23.6 0.5 20.5 Z" fill="#858b90"/></svg>
<div class="t" style="left:1033.00px;top:145.42px;font-size:23.3px;line-height:30px;color:#383838;font-weight:400;font-family:'Liberation Sans', sans-serif;">StudentsAndCourses</div>
<svg class="s" style="left:1263.5px;top:150px;" width="9" height="22" viewBox="0 0 9 22"><path d="M1.5 2 L7 11 L1.5 20" fill="none" stroke="#7d7d7d" stroke-width="1.7" stroke-linejoin="round"/></svg>
<svg class="s" style="left:1288.8px;top:150.2px;" width="25.2" height="20" viewBox="0 0 29 24"><path d="M0.5 4 Q0.5 0.5 4 0.5 L9.5 0.5 Q11.3 0.5 12.5 1.6 L13.8 2.8 L25.5 2.8 Q28.5 2.8 28.5 6 L28.5 7.8 L0.5 7.8 Z" fill="#858b90"/><path d="M0.5 10 L28.5 10 L28.5 20.5 Q28.5 23.6 25.5 23.6 L3.5 23.6 Q0.5 23.6 0.5 20.5 Z" fill="#858b90"/></svg>
<div class="t" style="left:1326.60px;top:145.42px;font-size:23.3px;line-height:30px;color:#383838;font-weight:400;font-family:'Liberation Sans', sans-serif;">ViewModels</div>
<svg class="s" style="left:1463.5px;top:150px;" width="9" height="22" viewBox="0 0 9 22"><path d="M1.5 2 L7 11 L1.5 20" fill="none" stroke="#7d7d7d" stroke-width="1.7" stroke-linejoin="round"/></svg>
<svg class="s" style="left:1489px;top:150.5px;" width="25.5" height="22.5" viewBox="340 320 860 760"><path d="M860,330 C1010,430 1140,620 1120,840 C1150,900 1190,980 1195,1060 C1130,1010 1060,995 990,1010 C900,1060 800,1090 700,1075 C560,1055 430,960 340,820 C480,900 680,930 820,860 C680,750 520,580 430,460 C560,560 680,650 760,680 C680,600 600,500 540,410 C680,520 820,660 930,720 C970,600 950,450 860,330 Z" fill="#ef6a3a"/></svg>
<div class="t" style="left:1526.00px;top:145.42px;font-size:23.3px;line-height:30px;color:#383838;font-weight:400;font-family:'Liberation Sans', sans-serif;">EnrolmentsByCourseViewModel</div>
<svg class="s" style="left:1869.5px;top:150px;" width="9" height="22" viewBox="0 0 9 22"><path d="M1.5 2 L7 11 L1.5 20" fill="none" stroke="#7d7d7d" stroke-width="1.7" stroke-linejoin="round"/></svg>
<svg class="s" style="left:1894px;top:147.5px;" width="28" height="28" viewBox="0 0 28 28"><rect x="0" y="0" width="28" height="28" rx="5" fill="#3d7cf5"/><path d="M7 21 L7 7.5 L14 16 L21 7.5 L21 21" fill="none" stroke="#ffffff" stroke-width="2.6" stroke-linejoin="round"/></svg>
<div class="t" style="left:1932.70px;top:145.42px;font-size:23.3px;line-height:30px;color:#383838;font-weight:400;font-family:'Liberation Sans', sans-serif;">getCoursesWithStudents()</div>
<div class="r" style="left:684px;top:1832px;width:2340px;height:2px;background:#e3e3e3;"></div>
<div class="r" style="left:706.6px;top:1851.3px;width:30px;height:19px;background:#3478f6;clip-path:polygon(0 0, 75% 0, 100% 50%, 75% 100%, 0 100%);border-radius:4px;"></div>
<div class="r" style="left:752.5px;top:1849px;width:1.5px;height:23px;background:#dcdcdc;"></div>
<svg class="s" style="left:773px;top:1847px;" width="22" height="28" viewBox="0 0 22 28"><rect x="2.5" y="2" width="5" height="24" rx="1.5" fill="none" stroke="#6e6e6e" stroke-width="1.8"/><rect x="14.5" y="2" width="5" height="24" rx="1.5" fill="none" stroke="#6e6e6e" stroke-width="1.8"/></svg>
<svg class="s" style="left:829px;top:1846px;" width="30" height="30" viewBox="0 0 30 30"><g fill="none" stroke="#b5b5b5" stroke-width="1.8" stroke-linejoin="round"><path d="M4 15 L15 5 L26 15 M26 15 L20 15 M26 15 L26 9"/><rect x="6" y="21" width="18" height="5"/></g></svg>
<svg class="s" style="left:892px;top:1846px;" width="24" height="30" viewBox="0 0 24 30"><g fill="none" stroke="#b5b5b5" stroke-width="1.8" stroke-linejoin="round"><path d="M12 2 L12 17 M6 11.5 L12 17 L18 11.5"/><rect x="3" y="21" width="18" height="5"/></g></svg>
<svg class="s" style="left:952px;top:1846px;" width="24" height="30" viewBox="0 0 24 30"><g fill="none" stroke="#b5b5b5" stroke-width="1.8" stroke-linejoin="round"><path d="M12 17 L12 3 M6 8.5 L12 3 L18 8.5"/><rect x="3" y="21" width="18" height="5"/></g></svg>
<div class="r" style="left:994.5px;top:1849px;width:1.5px;height:23px;background:#dcdcdc;"></div>
<svg class="s" style="left:1005px;top:1840px;" width="40" height="40" viewBox="0 0 40 40"><g fill="none" stroke="#6e6e6e" stroke-width="1.8" stroke-linecap="round" stroke-linejoin="round"><path d="M11 28.2 L11 15 Q11 14 12 13.6 L22.6 8.6"/><path d="M15 31 L15 18 Q15 17 16 16.6 L26.8 11.3"/><path d="M19.2 20.2 Q19.2 19.4 20 19 L29.6 14.3 Q30.6 13.9 30.6 15 L30.6 26.6 Q30.6 27.4 29.8 27.8 L20.2 32.8 Q19.2 33.3 19.2 32.2 Z"/></g></svg>
<svg class="s" style="left:1071px;top:1846px;" width="30" height="30" viewBox="0 0 30 30"><g fill="none" stroke="#6e6e6e" stroke-width="1.9"><circle cx="6.5" cy="5.5" r="4"/><circle cx="6.5" cy="24.5" r="4"/><circle cx="24" cy="15" r="4"/><path d="M10 8 L20 13 M10 22 L20 17"/></g></svg>
<svg class="s" style="left:1133px;top:1846px;" width="26" height="30" viewBox="0 0 26 30"><g fill="none" stroke="#6e6e6e" stroke-width="1.9"><rect x="2" y="2" width="21" height="11" rx="5.5"/><rect x="2" y="17" width="21" height="11" rx="5.5"/></g><circle cx="7.8" cy="7.5" r="3.2" fill="#6e6e6e"/><circle cx="17.2" cy="22.5" r="3.2" fill="#6e6e6e"/></svg>
<svg class="s" style="left:1191px;top:1846px;" width="30" height="30" viewBox="0 0 30 30"><path d="M2.5 13 L27 3 L17.5 27.5 L14.5 16 Z" fill="none" stroke="#6e6e6e" stroke-width="1.9" stroke-linejoin="round"/></svg>
<div class="r" style="left:1236px;top:1849px;width:1.5px;height:23px;background:#dcdcdc;"></div>
<svg class="s" style="left:1255.4px;top:1848.6px;" width="24" height="24" viewBox="0 0 30 30"><rect x="0" y="0" width="30" height="30" rx="5" fill="#6f6f6f"/><g stroke="#ffffff" stroke-width="2.1" stroke-linecap="round" fill="none"><path d="M12.4 6.4 L21.6 22.4"/><path d="M17.4 6.4 L10.6 16.8"/><path d="M5.8 18.3 L24 18.3"/><path d="M9 20.9 L7.9 22.6"/></g></svg>
<div class="t" style="left:1291.00px;top:1845.82px;font-size:23.6px;line-height:31px;color:#383838;font-weight:400;font-family:'Liberation Sans', sans-serif;">StudentsAndCourses</div>
<div class="t" style="left:2761.00px;top:1846.60px;font-size:22.5px;line-height:29px;color:#7c7c7c;font-weight:400;font-family:'Liberation Sans', sans-serif;letter-spacing:0.85px;">Line: 32  Col: 23</div>
<div class="r" style="left:2954.5px;top:1849px;width:1.5px;height:24px;background:#dcdcdc;"></div>
<svg class="s" style="left:2971px;top:1846.5px;" width="30" height="30" viewBox="0 0 30 30"><rect x="2.6" y="2.6" width="24.8" height="24.4" rx="4.5" fill="none" stroke="#6e6e6e" stroke-width="1.9"/><rect x="6" y="18.2" width="18" height="5.5" rx="2" fill="#7a7a7a"/></svg>
<div class="r" style="left:2994px;top:190px;width:1.6px;height:1642px;background:#e6e6e6;"></div>
<div class="r" style="left:2995.6px;top:190px;width:26.4px;height:1642px;background:#f9f9f9;"></div>
<div class="r" style="left:3022px;top:190px;width:2px;height:1642px;background:#ececec;"></div>
<div class="r" style="left:3002px;top:337.5px;width:16px;height:1117.5px;background:#7f7f7f;border-radius:8px;"></div>
<div class="r" style="left:684px;top:1192px;width:2310px;height:40px;background:#edf3fd;"></div>
<div class="r" style="left:694px;top:272px;width:10px;height:1320px;box-sizing:border-box;border:2px solid #2f6ef5;background:#aac7f9;border-radius:5px;"></div>
<div class="r" style="left:692.5px;top:1192px;width:1.5px;height:40px;background:#ffffff;"></div>
<div class="r" style="left:704px;top:1192px;width:1.5px;height:40px;background:#ffffff;"></div>
<div class="r" style="left:782px;top:354.5px;width:14px;height:1235.0px;background:#e6e6e6;border-radius:7px;"></div>
<div class="r" style="left:782px;top:594.5px;width:14px;height:235.0px;background:#d5d5d5;border-radius:7px;"></div>
<div class="r" style="left:782px;top:674.5px;width:14px;height:115.0px;background:#c1c1c1;border-radius:7px;"></div>
<div class="r" style="left:782px;top:914.5px;width:14px;height:635.0px;background:#d5d5d5;border-radius:7px;"></div>
<div class="r" style="left:782px;top:994.5px;width:14px;height:375.0px;background:#c1c1c1;border-radius:7px;"></div>
<div class="r" style="left:782px;top:1374.5px;width:14px;height:95.0px;background:#c1c1c1;border-radius:7px;"></div>
<div class="r" style="left:782px;top:1192px;width:14px;height:40px;background:rgba(120,140,170,0.12);"></div>
<div class="t" style="right:2252px;top:193.63px;font-size:30.5px;line-height:40px;color:#a0a0a0;font-family:'Liberation Sans', sans-serif;text-align:right;transform:scaleX(0.87);transform-origin:right center;">7</div>
<div class="t" style="right:2252px;top:233.63px;font-size:30.5px;line-height:40px;color:#a0a0a0;font-family:'Liberation Sans', sans-serif;text-align:right;transform:scaleX(0.87);transform-origin:right center;">8</div>
<div class="t" style="right:2252px;top:273.63px;font-size:30.5px;line-height:40px;color:#a0a0a0;font-family:'Liberation Sans', sans-serif;text-align:right;transform:scaleX(0.87);transform-origin:right center;">9</div>
<div class="t" style="right:2252px;top:313.63px;font-size:30.5px;line-height:40px;color:#a0a0a0;font-family:'Liberation Sans', sans-serif;text-align:right;transform:scaleX(0.87);transform-origin:right center;">10</div>
<div class="t" style="right:2252px;top:353.63px;font-size:30.5px;line-height:40px;color:#a0a0a0;font-family:'Liberation Sans', sans-serif;text-align:right;transform:scaleX(0.87);transform-origin:right center;">11</div>
<div class="t" style="right:2252px;top:393.63px;font-size:30.5px;line-height:40px;color:#a0a0a0;font-family:'Liberation Sans', sans-serif;text-align:right;transform:scaleX(0.87);transform-origin:right center;">12</div>
<div class="t" style="right:2252px;top:433.63px;font-size:30.5px;line-height:40px;color:#a0a0a0;font-family:'Liberation Sans', sans-serif;text-align:right;transform:scaleX(0.87);transform-origin:right center;">13</div>
<div class="t" style="right:2252px;top:473.63px;font-size:30.5px;line-height:40px;color:#a0a0a0;font-family:'Liberation Sans', sans-serif;text-align:right;transform:scaleX(0.87);transform-origin:right center;">14</div>
<div class="t" style="right:2252px;top:513.63px;font-size:30.5px;line-height:40px;color:#a0a0a0;font-family:'Liberation Sans', sans-serif;text-align:right;transform:scaleX(0.87);transform-origin:right center;">15</div>
<div class="t" style="right:2252px;top:553.63px;font-size:30.5px;line-height:40px;color:#a0a0a0;font-family:'Liberation Sans', sans-serif;text-align:right;transform:scaleX(0.87);transform-origin:right center;">16</div>
<div class="t" style="right:2252px;top:593.63px;font-size:30.5px;line-height:40px;color:#a0a0a0;font-family:'Liberation Sans', sans-serif;text-align:right;transform:scaleX(0.87);transform-origin:right center;">17</div>
<div class="t" style="right:2252px;top:633.63px;font-size:30.5px;line-height:40px;color:#a0a0a0;font-family:'Liberation Sans', sans-serif;text-align:right;transform:scaleX(0.87);transform-origin:right center;">18</div>
<div class="t" style="right:2252px;top:673.63px;font-size:30.5px;line-height:40px;color:#a0a0a0;font-family:'Liberation Sans', sans-serif;text-align:right;transform:scaleX(0.87);transform-origin:right center;">19</div>
<div class="t" style="right:2252px;top:713.63px;font-size:30.5px;line-height:40px;color:#a0a0a0;font-family:'Liberation Sans', sans-serif;text-align:right;transform:scaleX(0.87);transform-origin:right center;">20</div>
<div class="t" style="right:2252px;top:753.63px;font-size:30.5px;line-height:40px;color:#a0a0a0;font-family:'Liberation Sans', sans-serif;text-align:right;transform:scaleX(0.87);transform-origin:right center;">21</div>
<div class="t" style="right:2252px;top:793.63px;font-size:30.5px;line-height:40px;color:#a0a0a0;font-family:'Liberation Sans', sans-serif;text-align:right;transform:scaleX(0.87);transform-origin:right center;">22</div>
<div class="t" style="right:2252px;top:833.63px;font-size:30.5px;line-height:40px;color:#a0a0a0;font-family:'Liberation Sans', sans-serif;text-align:right;transform:scaleX(0.87);transform-origin:right center;">23</div>
<div class="t" style="right:2252px;top:873.63px;font-size:30.5px;line-height:40px;color:#a0a0a0;font-family:'Liberation Sans', sans-serif;text-align:right;transform:scaleX(0.87);transform-origin:right center;">24</div>
<div class="t" style="right:2252px;top:913.63px;font-size:30.5px;line-height:40px;color:#a0a0a0;font-family:'Liberation Sans', sans-serif;text-align:right;transform:scaleX(0.87);transform-origin:right center;">25</div>
<div class="t" style="right:2252px;top:953.63px;font-size:30.5px;line-height:40px;color:#a0a0a0;font-family:'Liberation Sans', sans-serif;text-align:right;transform:scaleX(0.87);transform-origin:right center;">26</div>
<div class="t" style="right:2252px;top:993.63px;font-size:30.5px;line-height:40px;color:#a0a0a0;font-family:'Liberation Sans', sans-serif;text-align:right;transform:scaleX(0.87);transform-origin:right center;">27</div>
<div class="t" style="right:2252px;top:1033.63px;font-size:30.5px;line-height:40px;color:#a0a0a0;font-family:'Liberation Sans', sans-serif;text-align:right;transform:scaleX(0.87);transform-origin:right center;">28</div>
<div class="t" style="right:2252px;top:1073.63px;font-size:30.5px;line-height:40px;color:#a0a0a0;font-family:'Liberation Sans', sans-serif;text-align:right;transform:scaleX(0.87);transform-origin:right center;">29</div>
<div class="t" style="right:2252px;top:1113.63px;font-size:30.5px;line-height:40px;color:#a0a0a0;font-family:'Liberation Sans', sans-serif;text-align:right;transform:scaleX(0.87);transform-origin:right center;">30</div>
<div class="t" style="right:2252px;top:1153.63px;font-size:30.5px;line-height:40px;color:#a0a0a0;font-family:'Liberation Sans', sans-serif;text-align:right;transform:scaleX(0.87);transform-origin:right center;">31</div>
<div class="t" style="right:2252px;top:1193.63px;font-size:30.5px;line-height:40px;color:#1d1d1d;font-family:'Liberation Sans', sans-serif;text-align:right;transform:scaleX(0.87);transform-origin:right center;">32</div>
<div class="t" style="right:2252px;top:1233.63px;font-size:30.5px;line-height:40px;color:#a0a0a0;font-family:'Liberation Sans', sans-serif;text-align:right;transform:scaleX(0.87);transform-origin:right center;">33</div>
<div class="t" style="right:2252px;top:1273.63px;font-size:30.5px;line-height:40px;color:#a0a0a0;font-family:'Liberation Sans', sans-serif;text-align:right;transform:scaleX(0.87);transform-origin:right center;">34</div>
<div class="t" style="right:2252px;top:1313.63px;font-size:30.5px;line-height:40px;color:#a0a0a0;font-family:'Liberation Sans', sans-serif;text-align:right;transform:scaleX(0.87);transform-origin:right center;">35</div>
<div class="t" style="right:2252px;top:1353.63px;font-size:30.5px;line-height:40px;color:#a0a0a0;font-family:'Liberation Sans', sans-serif;text-align:right;transform:scaleX(0.87);transform-origin:right center;">36</div>
<div class="t" style="right:2252px;top:1393.63px;font-size:30.5px;line-height:40px;color:#a0a0a0;font-family:'Liberation Sans', sans-serif;text-align:right;transform:scaleX(0.87);transform-origin:right center;">37</div>
<div class="t" style="right:2252px;top:1433.63px;font-size:30.5px;line-height:40px;color:#a0a0a0;font-family:'Liberation Sans', sans-serif;text-align:right;transform:scaleX(0.87);transform-origin:right center;">38</div>
<div class="t" style="right:2252px;top:1473.63px;font-size:30.5px;line-height:40px;color:#a0a0a0;font-family:'Liberation Sans', sans-serif;text-align:right;transform:scaleX(0.87);transform-origin:right center;">39</div>
<div class="t" style="right:2252px;top:1513.63px;font-size:30.5px;line-height:40px;color:#a0a0a0;font-family:'Liberation Sans', sans-serif;text-align:right;transform:scaleX(0.87);transform-origin:right center;">40</div>
<div class="t" style="right:2252px;top:1553.63px;font-size:30.5px;line-height:40px;color:#a0a0a0;font-family:'Liberation Sans', sans-serif;text-align:right;transform:scaleX(0.87);transform-origin:right center;">41</div>
<div class="t" style="right:2252px;top:1593.63px;font-size:30.5px;line-height:40px;color:#a0a0a0;font-family:'Liberation Sans', sans-serif;text-align:right;transform:scaleX(0.87);transform-origin:right center;">42</div>
<div class="t" style="left:820.5px;top:233.78px;font-family:'Liberation Mono', monospace;font-size:30.878px;line-height:40px;"><span style="color:#a3439f;font-weight:700;">import</span><span style="color:#262626;"> Foundation</span></div>
<div class="t" style="left:820.5px;top:313.78px;font-family:'Liberation Mono', monospace;font-size:30.878px;line-height:40px;"><span style="color:#262626;">@Observable</span></div>
<div class="t" style="left:820.5px;top:353.78px;font-family:'Liberation Mono', monospace;font-size:30.878px;line-height:40px;"><span style="color:#a3439f;font-weight:700;">class</span><span style="color:#262626;"> </span><span style="color:#1f5b88;">EnrolmentsByCourseViewModel</span><span style="color:#262626;">: Observable {</span></div>
<div class="t" style="left:820.5px;top:433.78px;font-family:'Liberation Mono', monospace;font-size:30.878px;line-height:40px;"><span style="color:#6b7986;">    // </span><span style="color:#5d6873;font-weight:700;">MARK: Storied properties</span></div>
<div class="t" style="left:820.5px;top:473.78px;font-family:'Liberation Mono', monospace;font-size:30.878px;line-height:40px;"><span style="color:#262626;">    </span><span style="color:#a3439f;font-weight:700;">var</span><span style="color:#262626;"> </span><span style="color:#3479ab;">coursesWithStudents</span><span style="color:#262626;">: [</span><span style="color:#2a5459;">CourseStudent</span><span style="color:#262626;">] = []</span></div>
<div class="t" style="left:820.5px;top:553.78px;font-family:'Liberation Mono', monospace;font-size:30.878px;line-height:40px;"><span style="color:#6b7986;">    // </span><span style="color:#5d6873;font-weight:700;">MARK: Initializer(s)</span></div>
<div class="t" style="left:820.5px;top:593.78px;font-family:'Liberation Mono', monospace;font-size:30.878px;line-height:40px;"><span style="color:#262626;">    </span><span style="color:#a3439f;font-weight:700;">init</span><span style="color:#262626;">() {</span></div>
<div class="t" style="left:820.5px;top:633.78px;font-family:'Liberation Mono', monospace;font-size:30.878px;line-height:40px;"><span style="color:#6b7986;">        // Get all courses from the database, along with their enrolled students</span></div>
<div class="t" style="left:820.5px;top:673.78px;font-family:'Liberation Mono', monospace;font-size:30.878px;line-height:40px;"><span style="color:#262626;">        </span><span style="color:#3c1aa6;">Task</span><span style="color:#262626;"> {</span></div>
<div class="t" style="left:820.5px;top:713.78px;font-family:'Liberation Mono', monospace;font-size:30.878px;line-height:40px;"><span style="color:#262626;">            </span><span style="color:#a3439f;font-weight:700;">try</span><span style="color:#262626;"> </span><span style="color:#a3439f;font-weight:700;">await</span><span style="color:#262626;"> </span><span style="color:#497b84;">getCoursesWithStudents</span><span style="color:#262626;">()</span></div>
<div class="t" style="left:820.5px;top:753.78px;font-family:'Liberation Mono', monospace;font-size:30.878px;line-height:40px;"><span style="color:#262626;">        }</span></div>
<div class="t" style="left:820.5px;top:793.78px;font-family:'Liberation Mono', monospace;font-size:30.878px;line-height:40px;"><span style="color:#262626;">    }</span></div>
<div class="t" style="left:820.5px;top:873.78px;font-family:'Liberation Mono', monospace;font-size:30.878px;line-height:40px;"><span style="color:#6b7986;">    // </span><span style="color:#5d6873;font-weight:700;">MARK: Functions</span></div>
<div class="t" style="left:820.5px;top:913.78px;font-family:'Liberation Mono', monospace;font-size:30.878px;line-height:40px;"><span style="color:#262626;">    </span><span style="color:#a3439f;font-weight:700;">func</span><span style="color:#262626;"> </span><span style="color:#3479ab;">getCoursesWithStudents</span><span style="color:#262626;">() </span><span style="color:#a3439f;font-weight:700;">async</span><span style="color:#262626;"> </span><span style="color:#a3439f;font-weight:700;">throws</span><span style="color:#262626;"> {</span></div>
<div class="t" style="left:820.5px;top:993.78px;font-family:'Liberation Mono', monospace;font-size:30.878px;line-height:40px;"><span style="color:#262626;">        </span><span style="color:#a3439f;font-weight:700;">do</span><span style="color:#262626;"> {</span></div>
<div class="t" style="left:820.5px;top:1033.78px;font-family:'Liberation Mono', monospace;font-size:30.878px;line-height:40px;"><span style="color:#262626;">            </span><span style="color:#a3439f;font-weight:700;">let</span><span style="color:#262626;"> results: [</span><span style="color:#2a5459;">CourseStudent</span><span style="color:#262626;">] = </span><span style="color:#a3439f;font-weight:700;">try</span><span style="color:#262626;"> </span><span style="color:#a3439f;font-weight:700;">await</span><span style="color:#262626;"> </span><span style="color:#497b84;">supabase</span></div>
<div class="t" style="left:820.5px;top:1073.78px;font-family:'Liberation Mono', monospace;font-size:30.878px;line-height:40px;"><span style="color:#262626;">                .from(</span><span style="color:#c4331f;">&quot;course&quot;</span><span style="color:#262626;">)</span></div>
<div class="t" style="left:820.5px;top:1113.78px;font-family:'Liberation Mono', monospace;font-size:30.878px;line-height:40px;"><span style="color:#262626;">                .</span><span style="color:#6f45b5;">select</span><span style="color:#262626;">(</span><span style="color:#c4331f;">&quot;id, short_code, name, student(id, first_name, last_name)&quot;</span><span style="color:#262626;">)</span></div>
<div class="t" style="left:820.5px;top:1153.78px;font-family:'Liberation Mono', monospace;font-size:30.878px;line-height:40px;"><span style="color:#262626;">                .execute()</span></div>
<div class="t" style="left:820.5px;top:1193.78px;font-family:'Liberation Mono', monospace;font-size:30.878px;line-height:40px;"><span style="color:#262626;">                .</span><span style="color:#6f45b5;">value</span></div>
<div class="t" style="left:820.5px;top:1273.78px;font-family:'Liberation Mono', monospace;font-size:30.878px;line-height:40px;"><span style="color:#262626;">            </span><span style="color:#a3439f;font-weight:700;">self</span><span style="color:#262626;">.</span><span style="color:#497b84;">coursesWithStudents</span><span style="color:#262626;"> = results</span></div>
<div class="t" style="left:820.5px;top:1353.78px;font-family:'Liberation Mono', monospace;font-size:30.878px;line-height:40px;"><span style="color:#262626;">        } </span><span style="color:#a3439f;font-weight:700;">catch</span><span style="color:#262626;"> {</span></div>
<div class="t" style="left:820.5px;top:1393.78px;font-family:'Liberation Mono', monospace;font-size:30.878px;line-height:40px;"><span style="color:#262626;">            </span><span style="color:#6f45b5;">debugPrint</span><span style="color:#262626;">(error)</span></div>
<div class="t" style="left:820.5px;top:1433.78px;font-family:'Liberation Mono', monospace;font-size:30.878px;line-height:40px;"><span style="color:#262626;">        }</span></div>
<div class="t" style="left:820.5px;top:1513.78px;font-family:'Liberation Mono', monospace;font-size:30.878px;line-height:40px;"><span style="color:#262626;">    }</span></div>
<div class="t" style="left:820.5px;top:1553.78px;font-family:'Liberation Mono', monospace;font-size:30.878px;line-height:40px;"><span style="color:#262626;">}</span></div>
<div class="r" style="left:1226.7px;top:1194px;width:3px;height:36px;background:#000000;"></div>
<svg class="s" style="left:0;top:0" width="3024" height="1888" viewBox="0 0 3024 1888"><line x1="1390" y1="1170.1" x2="2450" y2="1170.1" stroke="#e84025" stroke-width="11.2"/><path d="M1341.3 1169.7 L1395.8 1141.9 L1395.8 1197 Z" fill="#e84025"/><path d="M1305 1219.1 Q1854 1212.2 2395 1329.9" fill="none" stroke="#84b853" stroke-width="11.2"/><path d="M1258.3 1219.5 L1313.1 1191.3 L1313.1 1246.1 Z" fill="#84b853"/></svg>
<div class="t" style="left:2486.50px;top:1137.02px;font-size:53.3px;line-height:69px;color:#e84025;font-weight:400;font-family:'Liberation Sans', sans-serif;">Returns the JSON</div>
<div class="t" style="left:2409.50px;top:1232.02px;font-size:53.3px;line-height:69px;color:#84b853;font-weight:400;font-family:'Liberation Sans', sans-serif;">Converts from JSON</div>
<div class="t" style="left:2409.50px;top:1296.02px;font-size:53.3px;line-height:69px;color:#84b853;font-weight:400;font-family:'Liberation Sans', sans-serif;">to an array of</div>
<div class="t" style="left:2409.50px;top:1360.02px;font-size:53.3px;line-height:69px;color:#84b853;font-weight:400;font-family:'Liberation Sans', sans-serif;">instances of</div>
<div class="t" style="left:2409.50px;top:1424.02px;font-size:53.3px;line-height:69px;color:#84b853;font-weight:400;font-family:'Liberation Sans', sans-serif;">CourseStudent</div>
<div class="t" style="left:2409.50px;top:1488.02px;font-size:53.3px;line-height:69px;color:#84b853;font-weight:400;font-family:'Liberation Sans', sans-serif;">structure</div>
<svg class="s" style="left:0;top:0" width="24" height="24" viewBox="0 0 24 24"><path d="M0 0 L22 0 Q0 0 0 22 Z" fill="#ffffff"/></svg>
<div class="r" style="left:0px;top:0px;width:14px;height:1.5px;background:#000000;"></div>
<svg class="s" style="left:0;top:1864" width="24" height="24" viewBox="0 0 24 24"><path d="M0 24 L22 24 Q0 24 0 2 Z" fill="#ffffff"/></svg>
</body></html>
